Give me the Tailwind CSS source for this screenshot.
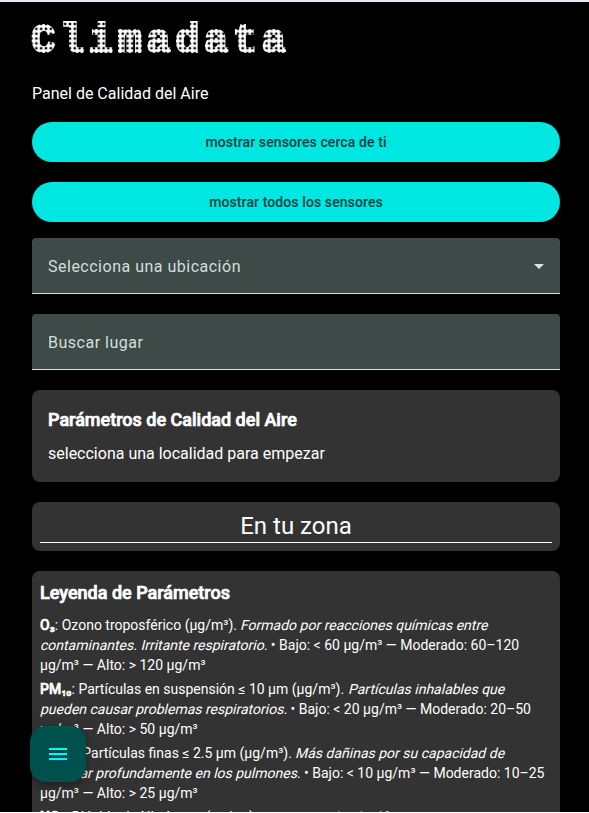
<!DOCTYPE html>
<html lang="es">
<head>
<meta charset="utf-8">
<title>Climadata</title>
<script src="https://cdn.jsdelivr.net/npm/@tailwindcss/browser@4"></script>
</head>
<body class="bg-black text-white font-[Roboto,sans-serif] overflow-hidden">
<div class="h-[812px] overflow-hidden border-t-2 border-[#e5e9f3] pl-8 pr-[29px] flex flex-col">
  <h1 class="mt-[14px] -ml-[1px] h-[48px] shrink-0 pt-px whitespace-nowrap font-['Liberation_Mono',monospace] font-bold text-[41px] leading-[48px] tracking-[4.2px] [-webkit-text-stroke:2px_white] [mask-image:radial-gradient(circle,black_2px,transparent_2.7px)] [mask-size:4.8px_4.87px] [mask-position:0.6px_3.1px]">Climadata</h1>
  <p class="mt-[18px] h-6 shrink-0 text-base leading-6">Panel de Calidad del Aire</p>
  <button class="mt-[16px] h-10 shrink-0 rounded-full bg-[#00e6e1] text-[#00413f] text-sm font-medium tracking-[0.1px]">mostrar sensores cerca de ti</button>
  <button class="mt-5 h-10 shrink-0 rounded-full bg-[#00e6e1] text-[#00413f] text-sm font-medium tracking-[0.1px]">mostrar todos los sensores</button>
  <div class="mt-4 h-14 shrink-0 rounded-t bg-[#3d4a47] border-b border-[#dae5e1] px-4 pt-0.5 flex items-center justify-between text-[#d3dfdb] tracking-[0.5px]">
    <span>Selecciona una ubicación</span>
    <svg class="w-[10px] h-[5px]" viewBox="0 0 10 5" fill="#dae5e1"><path d="M0 0h10L5 5z"/></svg>
  </div>
  <div class="mt-5 h-14 shrink-0 rounded-t bg-[#3d4a47] border-b border-[#dae5e1] px-4 pt-0.5 flex items-center text-[#d3dfdb] tracking-[0.5px]">Buscar lugar</div>
  <section class="mt-5 h-[92px] shrink-0 rounded-lg bg-[#333] px-4 pt-4">
    <h2 class="text-lg font-medium leading-7 [-webkit-text-stroke:0.7px_white]">Parámetros de Calidad del Aire</h2>
    <p class="mt-2 leading-6">selecciona una localidad para empezar</p>
  </section>
  <section class="mt-5 h-[49px] shrink-0 rounded-lg bg-[#333] px-2 pt-2">
    <h2 class="h-[33px] border-b border-white text-center text-2xl leading-8">En tu zona</h2>
  </section>
  <section class="mt-5 h-[400px] shrink-0 rounded-lg bg-[#333] p-2 text-sm leading-5">
    <h2 class="text-lg font-medium leading-7 [-webkit-text-stroke:0.7px_white]">Leyenda de Parámetros</h2>
    <ul class="mt-2 flex flex-col gap-1 whitespace-nowrap">
      <li><b class="font-medium [-webkit-text-stroke:0.6px_white]">O₃</b>: Ozono troposférico (µg/m³). <i class="inline-block not-italic skew-x-[-14deg] origin-[0_75%]">Formado por reacciones químicas entre</i><br><i class="inline-block not-italic skew-x-[-14deg] origin-[0_75%]">contaminantes. Irritante respiratorio.</i> • Bajo: &lt; 60 µg/m³ — Moderado: 60–120<br>µg/m³ — Alto: &gt; 120 µg/m³</li>
      <li><b class="font-medium [-webkit-text-stroke:0.6px_white]">PM₁₀</b>: Partículas en suspensión ≤ 10 µm (µg/m³). <i class="inline-block not-italic skew-x-[-14deg] origin-[0_75%]">Partículas inhalables que</i><br><i class="inline-block not-italic skew-x-[-14deg] origin-[0_75%]">pueden causar problemas respiratorios.</i> • Bajo: &lt; 20 µg/m³ — Moderado: 20–50<br>µg/m³ — Alto: &gt; 50 µg/m³</li>
      <li><b class="font-medium [-webkit-text-stroke:0.6px_white]">PM₂.₅</b>: Partículas finas ≤ 2.5 µm (µg/m³). <i class="inline-block not-italic skew-x-[-14deg] origin-[0_75%]">Más dañinas por su capacidad de</i><br><i class="inline-block not-italic skew-x-[-14deg] origin-[0_75%]">penetrar profundamente en los pulmones.</i> • Bajo: &lt; 10 µg/m³ — Moderado: 10–25<br>µg/m³ — Alto: &gt; 25 µg/m³</li>
      <li><b class="font-medium [-webkit-text-stroke:0.6px_white]">NO₂</b>: Dióxido de Nitrógeno (µg/m³). <i class="inline-block not-italic skew-x-[-14deg] origin-[0_75%]">Gas asociado al tráfico</i></li>
    </ul>
  </section>
</div>
<div class="h-px bg-white"></div>
<button class="fixed left-[30px] top-[726px] size-14 rounded-2xl bg-[#00504e] shadow-[0_3px_5px_rgba(0,0,0,0.2),0_6px_10px_rgba(0,0,0,0.14),0_1px_18px_rgba(0,0,0,0.12)] flex items-center justify-center" aria-label="Menú">
  <svg class="size-6" viewBox="0 0 24 24" fill="#00fbf6"><path d="M3 18h18v-2H3v2zm0-5h18v-2H3v2zm0-7v2h18V6H3z"/></svg>
</button>
</body>
</html>
